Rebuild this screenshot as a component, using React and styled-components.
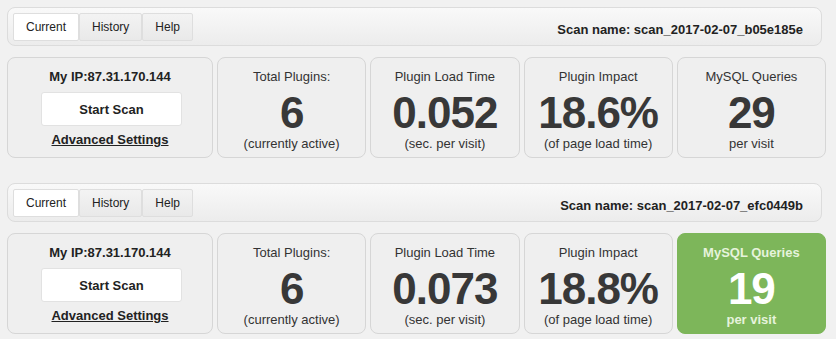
import React from "react";
import styled, { createGlobalStyle } from "styled-components";

const GlobalStyle = createGlobalStyle`
  html, body {
    margin: 0;
    padding: 0;
    background: #f1f1f1;
    font-family: "Liberation Sans", Arial, sans-serif;
    color: #333;
  }
`;

const Page = styled.div`
  display: flex;
  flex-direction: column;
  gap: 25px;
  padding: 7px 10px 0 7px;
`;

const Panel = styled.div`
  display: flex;
  flex-direction: column;
  gap: 11px;
`;

const Toolbar = styled.div`
  display: flex;
  align-items: center;
  justify-content: space-between;
  height: 39px;
  box-sizing: border-box;
  margin-right: 4px;
  padding: 0 18px 0 5px;
  border: 1px solid #dcdcdc;
  border-radius: 8px;
  background: linear-gradient(#f9f9f9, #ececec);
`;

const Tabs = styled.div`
  display: flex;
  gap: 0;
`;

const Tab = styled.button`
  height: 28px;
  padding: 0 12px;
  font-family: inherit;
  font-size: 12px;
  color: #222;
  border: 1px solid #dedede;
  border-radius: 2px;
  background: ${({ active }) => (active ? "#fff" : "linear-gradient(#f3f3f3, #e9e9e9)")};
  cursor: pointer;
`;

const ScanName = styled.div`
  padding-top: 6px;
  font-size: 13px;
  font-weight: 700;
  color: #222;
`;

const Cards = styled.div`
  display: grid;
  grid-template-columns: 206px repeat(4, 1fr);
  gap: 4px;
  height: 101px;
`;

const Card = styled.div`
  display: flex;
  flex-direction: column;
  align-items: center;
  box-sizing: border-box;
  padding-top: 11px;
  border: 1px solid ${({ good }) => (good ? "#7db65a" : "#d6d6d6")};
  border-radius: 8px;
  background: ${({ good }) => (good ? "#7db65a" : "#efefef")};
  color: ${({ good }) => (good ? "#fff" : "#333")};
`;

const Title = styled.div`
  font-size: 13px;
  line-height: 16px;
  color: ${({ good }) => (good ? "#e6f3dc" : "#333")};
  font-weight: ${({ good }) => (good ? 700 : 400)};
`;

const Value = styled.div`
  margin-top: 6px;
  font-size: 44px;
  line-height: 44px;
  font-weight: 700;
  letter-spacing: -1px;
  color: ${({ good }) => (good ? "#fff" : "#383838")};
`;

const Note = styled.div`
  margin-top: 1px;
  font-size: 13px;
  line-height: 16px;
  color: ${({ good }) => (good ? "#e6f3dc" : "#333")};
  font-weight: ${({ good }) => (good ? 700 : 400)};
`;

const MyIp = styled.div`
  font-size: 13px;
  line-height: 16px;
  font-weight: 700;
  color: #222;
`;

const StartButton = styled.button`
  width: 141px;
  height: 34px;
  margin: 7px 0 0 3px;
  font-family: inherit;
  font-size: 13px;
  font-weight: 700;
  color: #222;
  background: #fff;
  border: 1px solid #e2e2e2;
  border-radius: 3px;
  cursor: pointer;
`;

const SettingsLink = styled.a`
  margin-top: 6px;
  font-size: 13px;
  line-height: 16px;
  font-weight: 700;
  color: #222;
  text-decoration: underline;
`;

const scans = [
  {
    name: "scan_2017-02-07_b05e185e",
    plugins: "6",
    load: "0.052",
    impact: "18.6%",
    queries: "29",
    good: false,
  },
  {
    name: "scan_2017-02-07_efc0449b",
    plugins: "6",
    load: "0.073",
    impact: "18.8%",
    queries: "19",
    good: true,
  },
];

function ScanPanel({ scan }) {
  return (
    <Panel>
      <Toolbar>
        <Tabs>
          <Tab active>Current</Tab>
          <Tab>History</Tab>
          <Tab>Help</Tab>
        </Tabs>
        <ScanName>Scan name: {scan.name}</ScanName>
      </Toolbar>
      <Cards>
        <Card>
          <MyIp>My IP:87.31.170.144</MyIp>
          <StartButton>Start Scan</StartButton>
          <SettingsLink>Advanced Settings</SettingsLink>
        </Card>
        <Card>
          <Title>Total Plugins:</Title>
          <Value>{scan.plugins}</Value>
          <Note>(currently active)</Note>
        </Card>
        <Card>
          <Title>Plugin Load Time</Title>
          <Value>{scan.load}</Value>
          <Note>(sec. per visit)</Note>
        </Card>
        <Card>
          <Title>Plugin Impact</Title>
          <Value>{scan.impact}</Value>
          <Note>(of page load time)</Note>
        </Card>
        <Card good={scan.good}>
          <Title good={scan.good}>MySQL Queries</Title>
          <Value good={scan.good}>{scan.queries}</Value>
          <Note good={scan.good}>per visit</Note>
        </Card>
      </Cards>
    </Panel>
  );
}

export default function App() {
  return (
    <>
      <GlobalStyle />
      <Page>
        {scans.map((s) => (
          <ScanPanel key={s.name} scan={s} />
        ))}
      </Page>
    </>
  );
}
